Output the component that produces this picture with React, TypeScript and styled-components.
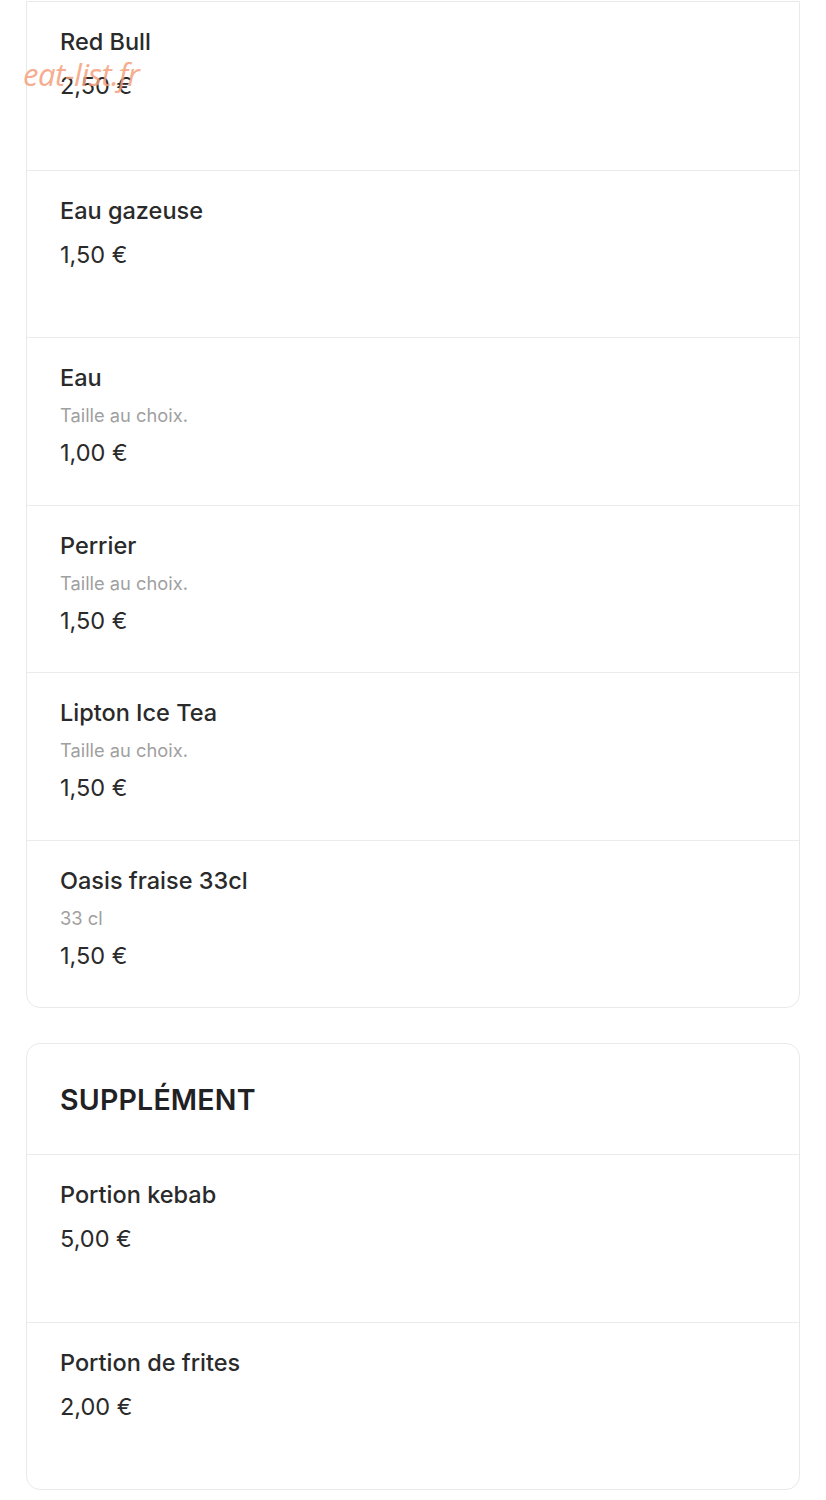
import React from 'react';

import styled, { createGlobalStyle } from 'styled-components';

type MenuItem = {
  name: string;
  description?: string;
  price: string;
};

type MenuSection = {
  title?: string;
  continued?: boolean;
  items: MenuItem[];
};

const SECTIONS: MenuSection[] = [
  {
    continued: true,
    items: [
      { name: 'Red Bull', price: '2,50 €' },
      { name: 'Eau gazeuse', price: '1,50 €' },
      { name: 'Eau', description: 'Taille au choix.', price: '1,00 €' },
      { name: 'Perrier', description: 'Taille au choix.', price: '1,50 €' },
      { name: 'Lipton Ice Tea', description: 'Taille au choix.', price: '1,50 €' },
      { name: 'Oasis fraise 33cl', description: '33 cl', price: '1,50 €' },
    ],
  },
  {
    title: 'SUPPLÉMENT',
    items: [
      { name: 'Portion kebab', price: '5,00 €' },
      { name: 'Portion de frites', price: '2,00 €' },
    ],
  },
];

const GlobalStyle = createGlobalStyle`
  body {
    margin: 0;
    background: #ffffff;
    font-family: Inter, 'Noto Sans', sans-serif;
    -webkit-font-smoothing: antialiased;
  }
`;

const App = (): JSX.Element => (
  <>
    <GlobalStyle />
    <StyledPage>
      <StyledWatermark>eat-list.fr</StyledWatermark>
      {SECTIONS.map((section, index) => (
        <StyledCard key={index} $continued={section.continued}>
          {section.title && (
            <StyledCardHeader>
              <StyledSectionTitle>{section.title}</StyledSectionTitle>
            </StyledCardHeader>
          )}
          {section.items.map((item) => (
            <StyledItemRow key={item.name}>
              <StyledItemName>{item.name}</StyledItemName>
              {item.description && (
                <StyledItemDescription>{item.description}</StyledItemDescription>
              )}
              <StyledItemPrice $hasDescription={!!item.description}>
                {item.price}
              </StyledItemPrice>
            </StyledItemRow>
          ))}
        </StyledCard>
      ))}
    </StyledPage>
  </>
);

const StyledPage = styled.div`
  display: flex;
  flex-direction: column;
  gap: 35px;
  padding: 1px 26px 40px;
  position: relative;
`;

const StyledWatermark = styled.span`
  color: #f4a07c;
  font-family: 'Open Sans', 'Noto Sans', sans-serif;
  font-size: 31px;
  font-style: italic;
  font-weight: 400;
  left: 23px;
  letter-spacing: -0.5px;
  line-height: 1;
  opacity: 0.85;
  pointer-events: none;
  position: absolute;
  top: 59px;
  z-index: 2;
`;

const StyledCard = styled.section<{ $continued?: boolean }>`
  background: #ffffff;
  border: 1.5px solid #e9e9e9;
  border-radius: ${({ $continued }) => ($continued ? '0 0 14px 14px' : '14px')};
  display: flex;
  flex-direction: column;
  overflow: hidden;
`;

const StyledCardHeader = styled.div`
  align-items: center;
  box-sizing: border-box;
  display: flex;
  height: 110px;
  padding: 0 33px;
`;

const StyledSectionTitle = styled.h2`
  color: #1f2124;
  font-size: 28.5px;
  font-weight: 600;
  letter-spacing: 0.2px;
  margin: 1px 0 0;
`;

const StyledItemRow = styled.div`
  box-sizing: border-box;
  display: flex;
  flex-direction: column;
  height: 167.5px;
  padding: 26px 33px 0;

  & + &,
  ${StyledCardHeader} + & {
    border-top: 1.5px solid #ececec;
  }
`;

const StyledItemName = styled.div`
  color: #2a2a2a;
  font-size: 23.5px;
  font-weight: 500;
  line-height: 28px;
`;

const StyledItemDescription = styled.div`
  color: #a0a0a0;
  font-size: 18.3px;
  line-height: 22px;
  margin-top: 12px;
`;

const StyledItemPrice = styled.div<{ $hasDescription?: boolean }>`
  color: #2a2a2a;
  font-size: 23.5px;
  font-weight: 400;
  line-height: 28px;
  margin-top: ${({ $hasDescription }) => ($hasDescription ? '13px' : '16px')};
`;

export default App;
